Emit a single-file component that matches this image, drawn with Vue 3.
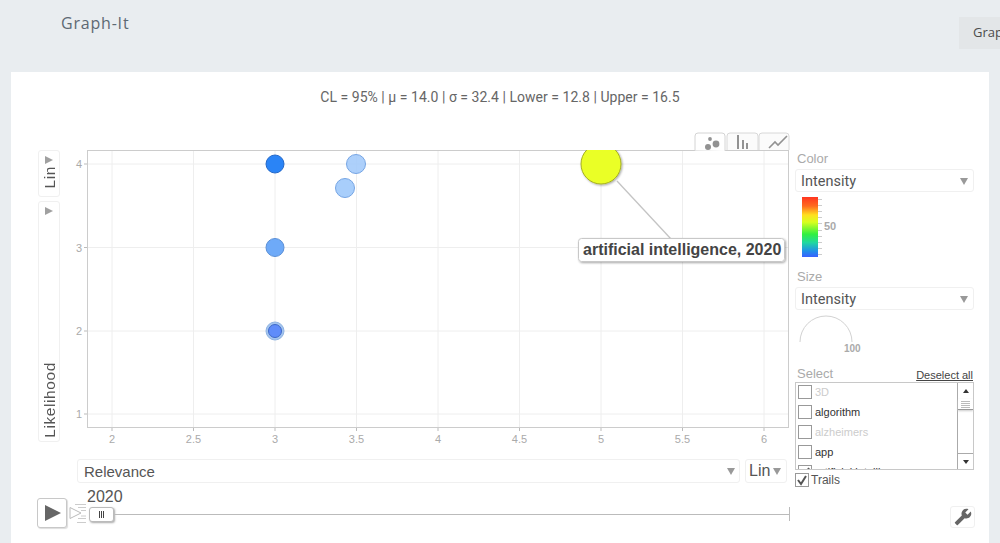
<script setup>
const xTicks = [
  { x: 112, label: '2' }, { x: 193.5, label: '2.5' }, { x: 275, label: '3' },
  { x: 356.5, label: '3.5' }, { x: 438, label: '4' }, { x: 519.5, label: '4.5' },
  { x: 601, label: '5' }, { x: 682.5, label: '5.5' }, { x: 764, label: '6' }
]
const yTicks = [
  { y: 164, label: '4' }, { y: 247.5, label: '3' }, { y: 331, label: '2' }, { y: 414, label: '1' }
]
const bubbles = [
  { x: 356, y: 164, r: 9.5, fill: '#a2cafb', stroke: '#76a5e4', o: 0.88 },
  { x: 345, y: 188, r: 9.5, fill: '#a8cefb', stroke: '#76a5e4', o: 1 },
  { x: 275, y: 164, r: 9, fill: '#2a84f6', stroke: '#2468c8', o: 1 },
  { x: 275, y: 247.5, r: 9, fill: '#6eaaf8', stroke: '#5a8fd6', o: 1 },
  { x: 275, y: 331, r: 9, fill: '#a3c4ee', stroke: '#8fb3e2', o: 1 },
  { x: 275, y: 331, r: 6.5, fill: '#5f8cfa', stroke: '#3e69c8', o: 1 }
]
const scaleTicks = [0, 1, 2, 3, 4, 5, 6, 7, 8, 9]
const items = [
  { name: '3D', dim: true },
  { name: 'algorithm', dim: false },
  { name: 'alzheimers', dim: true },
  { name: 'app', dim: false },
  { name: 'artificial intelligence', dim: false, checked: true }
]
</script>

<template>
  <div class="page">
    <header class="top">
      <span class="brand">Graph-It</span>
      <span class="nav-btn">Graph</span>
    </header>

    <main class="card">
      <p class="stats">CL = 95% | μ = 14.0 | σ = 32.4 | Lower = 12.8 | Upper = 16.5</p>

      <div class="chart">
        <section class="left">
          <div class="plot-row">
            <div class="y-axis">
              <div class="y-btn y-lin"><i class="arrow-r"></i><span class="vtext">Lin</span></div>
              <div class="y-btn y-name"><i class="arrow-r"></i><span class="vtext">Likelihood</span></div>
            </div>

            <svg class="plot" viewBox="62 125 733 334" width="733" height="334">
              <defs>
                <clipPath id="plotClip"><rect x="87" y="150" width="702" height="278" /></clipPath>
                <filter id="soft" x="-20%" y="-20%" width="150%" height="150%">
                  <feDropShadow dx="1" dy="1" stdDeviation="1" flood-color="#000" flood-opacity="0.35" />
                </filter>
              </defs>

              <rect x="87.5" y="150.5" width="701" height="277" fill="#fff" stroke="#cccccc" />
              <g stroke="#eeeeee">
                <line v-for="t in xTicks" :key="t.label" :x1="t.x" :x2="t.x" y1="151" y2="427" />
                <line v-for="t in yTicks" :key="t.label" x1="88" x2="788" :y1="t.y" :y2="t.y" />
              </g>
              <g stroke="#bbbbbb">
                <line v-for="t in xTicks" :key="t.label" :x1="t.x" :x2="t.x" y1="428" y2="431" />
                <line v-for="t in yTicks" :key="t.label" x1="84" x2="87" :y1="t.y" :y2="t.y" />
              </g>
              <g class="tick-text">
                <text v-for="t in xTicks" :key="t.label" :x="t.x" y="443" text-anchor="middle">{{ t.label }}</text>
                <text v-for="t in yTicks" :key="t.label" x="82" :y="t.y + 4" text-anchor="end">{{ t.label }}</text>
              </g>

              <g clip-path="url(#plotClip)">
                <circle v-for="(b, i) in bubbles" :key="i" :cx="b.x" :cy="b.y" :r="b.r" :fill="b.fill" :fill-opacity="b.o" :stroke="b.stroke" />
                <circle cx="601" cy="164" r="20" fill="#eaff26" stroke="#a6b021" filter="url(#soft)" />
              </g>

              <line x1="617" y1="181" x2="671" y2="239" stroke="#c4c4c4" stroke-width="1.3" />
              <rect x="578.5" y="238.5" width="206" height="23" rx="3" fill="#fff" stroke="#c8c8c8" filter="url(#soft)" />
              <text class="tip" x="583" y="255">artificial intelligence, 2020</text>

              <g class="tabs">
                <path d="M695 150.5V136a3 3 0 0 1 3-3h24a3 3 0 0 1 3 3v15" fill="#fff" stroke="#d4d4d4" />
                <path d="M727 150V136a3 3 0 0 1 3-3h25a3 3 0 0 1 3 3v14" fill="#fbfbfb" stroke="#d8d8d8" />
                <path d="M759 150V136a3 3 0 0 1 3-3h24a3 3 0 0 1 3 3v14" fill="#fbfbfb" stroke="#d8d8d8" />
                <g fill="#929292">
                  <circle cx="708" cy="147" r="3" />
                  <circle cx="716" cy="144" r="3.4" />
                  <circle cx="710" cy="139" r="1.9" />
                </g>
                <g fill="#929292">
                  <rect x="737" y="135" width="2" height="14" />
                  <rect x="742" y="140" width="2" height="9" />
                  <rect x="746" y="143" width="2" height="6" />
                </g>
                <path d="M769 148l6-6 3 3 9-9" fill="none" stroke="#929292" stroke-width="1.6" />
              </g>
            </svg>
          </div>

          <div class="x-row">
            <div class="select x-select"><span>Relevance</span><i class="arrow-d"></i></div>
            <div class="select x-lin"><span>Lin</span><i class="arrow-d"></i></div>
          </div>

          <div class="player">
            <button class="play"><svg width="18" height="18" viewBox="0 0 18 18"><path d="M1 1l16 8-16 8z" fill="#666" /></svg></button>
            <svg class="step" width="18" height="20" viewBox="0 0 18 20">
              <path d="M1 4.500l11 5.500-11 5.500z" fill="#fff" stroke="#bbb" />
              <path d="M6 1.500h11M9 4.500h8M12 7.500h5M12 13h5M9 15.500h8M8 19.500h9" stroke="#ccc" fill="none" />
            </svg>
            <div class="time">
              <div class="year">2020</div>
              <div class="track">
                <div class="handle"><b></b><b></b><b></b></div>
                <div class="line"></div>
                <div class="end"></div>
              </div>
            </div>
          </div>
        </section>

        <aside class="right">
          <div class="label color-label">Color</div>
          <div class="select side-select"><span>Intensity</span><i class="arrow-d"></i></div>
          <div class="legend">
            <div class="bar"></div>
            <div class="scale"><i v-for="t in scaleTicks" :key="t"></i></div>
            <span class="legend-num">50</span>
          </div>

          <div class="label size-label">Size</div>
          <div class="select side-select"><span>Intensity</span><i class="arrow-d"></i></div>
          <div class="size-key">
            <svg width="56" height="30" viewBox="0 0 56 30"><path d="M2 27a26 26 0 0 1 52 0" fill="none" stroke="#d2d2d2" /></svg>
            <span class="size-num">100</span>
          </div>

          <div class="select-head">
            <span class="label">Select</span>
            <a class="deselect">Deselect all</a>
          </div>
          <div class="listbox">
            <ul class="list">
              <li v-for="it in items" :key="it.name" :class="{ dim: it.dim }">
                <span class="check">
                  <svg v-if="it.checked" width="12" height="12" viewBox="0 0 12 12"><path d="M2 6l3 4 5-8" fill="none" stroke="#555" stroke-width="2" /></svg>
                </span>
                <span class="name">{{ it.name }}</span>
              </li>
            </ul>
            <div class="scrollbar">
              <div class="sb-btn"><i class="sb-up"></i></div>
              <div class="sb-thumb"><b></b><b></b><b></b><b></b></div>
              <div class="sb-space"></div>
              <div class="sb-btn sb-bottom"><i class="sb-down"></i></div>
            </div>
          </div>
          <div class="trails">
            <span class="check">
              <svg width="12" height="12" viewBox="0 0 12 12"><path d="M2 6l3 4 5-8" fill="none" stroke="#555" stroke-width="2" /></svg>
            </span>
            <span>Trails</span>
          </div>
          <div class="tools">
            <button class="wrench">
              <svg width="18" height="18" viewBox="0 0 24 24"><path transform="translate(24 0) scale(-1 1)" d="M22.700 19l-9.100-9.100c.9-2.300.4-5-1.500-6.900-2-2-5-2.400-7.400-1.300L9 6 6 9 1.600 4.700C.4 7.100.9 10.100 2.900 12.100c1.900 1.900 4.600 2.400 6.900 1.500l9.100 9.100c.4.4 1 .4 1.400 0l2.300-2.300c.5-.4.5-1.100.1-1.400z" fill="#666" /></svg>
            </button>
          </div>
        </aside>
      </div>
    </main>
  </div>
</template>

<style>
html, body { margin: 0; padding: 0; overflow: hidden; }
</style>

<style scoped>
.page {
  width: 1000px;
  height: 543px;
  overflow: hidden;
  background: #e9edf0;
  font-family: "Liberation Sans", Arial, sans-serif;
  color: #555;
}
.top {
  height: 72px;
  display: flex;
  justify-content: space-between;
  align-items: flex-start;
  padding-left: 61px;
  box-sizing: border-box;
}
.brand {
  margin-top: 13px;
  font-family: "Open Sans", sans-serif;
  font-size: 16px;
  line-height: 21px;
  letter-spacing: 0.8px;
  color: #5d6973;
}
.nav-btn {
  margin-top: 17px;
  width: 41px;
  height: 32px;
  overflow: hidden;
  box-sizing: border-box;
  padding-left: 14px;
  background: #e3e6e8;
  font-family: "Open Sans", sans-serif;
  font-size: 13px;
  line-height: 30px;
  color: #4c4c4c;
  white-space: nowrap;
}
.card {
  width: 978px;
  height: 471px;
  margin-left: 11px;
  background: #fff;
  overflow: hidden;
}
.stats {
  margin: 0;
  height: 53px;
  padding-top: 16px;
  box-sizing: border-box;
  text-align: center;
  font-family: Roboto, sans-serif;
  font-size: 14px;
  letter-spacing: 0.03px;
  line-height: 18px;
  color: #666;
}
.chart { display: flex; padding-left: 27px; }
.left { width: 757px; }
.right { width: 180px; font-size: 13px; }

.plot-row { display: flex; height: 334px; }
.y-axis {
  width: 22px;
  margin-right: 2px;
  padding-top: 25px;
  display: flex;
  flex-direction: column;
  gap: 4px;
}
.y-btn {
  width: 22px;
  box-sizing: border-box;
  border: 1px solid #f0f0f0;
  border-radius: 3px;
  display: flex;
  flex-direction: column;
  align-items: center;
  justify-content: space-between;
  padding-top: 5px;
}
.y-lin { height: 47px; }
.y-lin .vtext { margin-bottom: 8px; }
.y-name { height: 241px; }
.vtext {
  writing-mode: vertical-rl;
  transform: rotate(180deg);
  font-size: 15.500px;
  letter-spacing: 0.6px;
  line-height: 20px;
  color: #555;
  margin-bottom: 3px;
  margin-left: 1px;
}
.arrow-r {
  width: 0;
  height: 0;
  border-left: 8px solid #a0a0a0;
  border-top: 4px solid transparent;
  border-bottom: 4px solid transparent;
}
.plot { display: block; }
.tick-text { font-size: 11px; fill: #aaa; }
.tip { font-size: 16px; font-weight: 700; fill: #444; }

.select {
  box-sizing: border-box;
  border: 1px solid #f0f0f0;
  border-radius: 3px;
  height: 24px;
  display: flex;
  align-items: center;
  justify-content: space-between;
  font-size: 15px;
  color: #555;
}
.arrow-d {
  width: 0;
  height: 0;
  border-top: 7px solid #999;
  border-left: 4px solid transparent;
  border-right: 4px solid transparent;
}
.x-row { display: flex; gap: 5px; margin-left: 39px; }
.x-select { width: 663px; padding: 0 4px 0 6px; }
.x-lin { width: 42px; padding: 0 5px 0 3px; font-size: 16px; }

.player { display: flex; align-items: flex-start; height: 45px; }
.play {
  width: 30px;
  height: 30px;
  margin: 15px 0 0 -1px;
  padding: 0 0 0 2px;
  background: #fff;
  border: 1px solid #c8c8c8;
  border-radius: 3px;
  box-shadow: 1px 1px 1px #ddd;
  display: flex;
  align-items: center;
  justify-content: center;
}
.step { margin: 20px 0 0 2px; }
.time { width: 703px; }
.year { height: 23px; font-size: 16px; line-height: 28px; color: #555; }
.track { display: flex; align-items: center; height: 16px; margin-left: 2px; }
.handle {
  box-sizing: border-box;
  width: 25px;
  height: 15px;
  background: #fff;
  border: 1px solid #bbb;
  border-radius: 3px;
  box-shadow: 1px 1px 2px #aaa;
  display: flex;
  justify-content: center;
  align-items: center;
  gap: 1px;
}
.handle b { width: 1px; height: 7px; background: #444; }
.line { width: 675px; height: 1px; background: #bbb; }
.end { width: 1px; height: 14px; background: #bbb; }

.label { color: #aaa; font-size: 13px; line-height: 16px; padding-left: 2px; }
.color-label { margin-top: 26px; height: 18px; }
.side-select { width: 179px; height: 23px; padding: 1px 5px 0 5px; font-size: 14.500px; font-family: Roboto, sans-serif; }
.legend { display: flex; height: 60px; margin: 5px 0 0 7px; align-items: stretch; }
.bar {
  width: 16px;
  background: linear-gradient(#ff3520 0%, #ff6a20 15%, #ffe020 30%, #d8ff20 42%, #30f040 62%, #20d8a0 76%, #2090e8 90%, #3860ff 100%);
}
.scale { width: 4px; display: flex; flex-direction: column; justify-content: space-between; padding: 2px 0; }
.scale i { height: 1px; background: #ccc; }
.legend-num { margin: 22px 0 0 2px; font-size: 11px; line-height: 14px; color: #aaa; font-weight: 700; }
.size-label { margin-top: 12px; height: 18px; }
.size-key { position: relative; height: 46px; padding: 5px 0 0 3px; box-sizing: border-box; }
.size-key svg { display: block; }
.size-num { position: absolute; left: 49px; top: 33px; font-size: 10px; font-weight: 700; color: #aaa; }
.select-head {
  display: flex;
  justify-content: space-between;
  align-items: flex-end;
  width: 178px;
  height: 17px;
  margin-top: 9px;
}
.deselect { font-size: 11px; line-height: 13px; color: #444; text-decoration: underline; }
.listbox {
  box-sizing: border-box;
  width: 179px;
  height: 88px;
  border: 1px solid #c8c8c8;
  display: flex;
  overflow: hidden;
}
.list { list-style: none; margin: -1px 0 0; padding: 0; flex: 1; min-width: 0; overflow: hidden; }
.list li { display: flex; align-items: center; height: 20px; padding-left: 2px; font-size: 11px; color: #333; white-space: nowrap; }
.list li.dim { color: #ccc; }
.check {
  box-sizing: border-box;
  width: 14px;
  height: 14px;
  flex: none;
  border: 1px solid #999;
  background: #fff;
  display: inline-block;
}
.check svg { display: block; }
.name { margin-left: 3px; }
.scrollbar { width: 15px; flex: none; border-left: 1px solid #aaa; display: flex; flex-direction: column; }
.sb-btn { height: 16px; display: flex; align-items: center; justify-content: center; }
.sb-bottom { height: 15px; border-top: 1px solid #aaa; }
.sb-up, .sb-down { width: 0; height: 0; border-left: 3px solid transparent; border-right: 3px solid transparent; }
.sb-up { border-bottom: 4px solid #333; }
.sb-down { border-top: 4px solid #333; }
.sb-thumb { height: 10px; border-bottom: 1px solid #999; display: flex; flex-direction: column; justify-content: center; gap: 1px; padding: 0 3px; box-shadow: 0 1px 2px #ccc; }
.sb-thumb b { height: 1px; background: #bbb; }
.sb-space { flex: 1; }
.trails { display: flex; align-items: center; gap: 2px; height: 18px; font-size: 12px; color: #555; margin-top: 1px; }
.tools { display: flex; justify-content: flex-end; margin-top: 17px; width: 180px; }
.wrench {
  width: 25px;
  height: 22px;
  padding: 0;
  background: #fff;
  border: 1px solid #f0f0f0;
  border-radius: 3px;
  display: flex;
  align-items: center;
  justify-content: center;
}
</style>
